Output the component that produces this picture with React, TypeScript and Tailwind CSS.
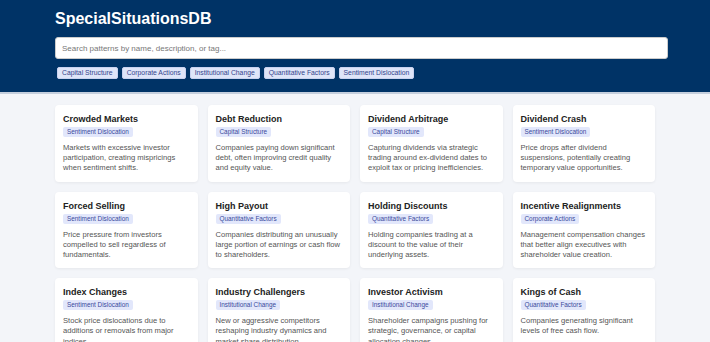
const CATEGORIES = [
  "Capital Structure",
  "Corporate Actions",
  "Institutional Change",
  "Quantitative Factors",
  "Sentiment Dislocation",
];

type Pattern = {
  name: string;
  tag: string;
  description: string;
};

const PATTERNS: Pattern[] = [
  {
    name: "Crowded Markets",
    tag: "Sentiment Dislocation",
    description: "Markets with excessive investor participation, creating mispricings when sentiment shifts.",
  },
  {
    name: "Debt Reduction",
    tag: "Capital Structure",
    description: "Companies paying down significant debt, often improving credit quality and equity value.",
  },
  {
    name: "Dividend Arbitrage",
    tag: "Capital Structure",
    description: "Capturing dividends via strategic trading around ex-dividend dates to exploit tax or pricing inefficiencies.",
  },
  {
    name: "Dividend Crash",
    tag: "Sentiment Dislocation",
    description: "Price drops after dividend suspensions, potentially creating temporary value opportunities.",
  },
  {
    name: "Forced Selling",
    tag: "Sentiment Dislocation",
    description: "Price pressure from investors compelled to sell regardless of fundamentals.",
  },
  {
    name: "High Payout",
    tag: "Quantitative Factors",
    description: "Companies distributing an unusually large portion of earnings or cash flow to shareholders.",
  },
  {
    name: "Holding Discounts",
    tag: "Quantitative Factors",
    description: "Holding companies trading at a discount to the value of their underlying assets.",
  },
  {
    name: "Incentive Realignments",
    tag: "Corporate Actions",
    description: "Management compensation changes that better align executives with shareholder value creation.",
  },
  {
    name: "Index Changes",
    tag: "Sentiment Dislocation",
    description: "Stock price dislocations due to additions or removals from major indices.",
  },
  {
    name: "Industry Challengers",
    tag: "Institutional Change",
    description: "New or aggressive competitors reshaping industry dynamics and market share distribution.",
  },
  {
    name: "Investor Activism",
    tag: "Institutional Change",
    description: "Shareholder campaigns pushing for strategic, governance, or capital allocation changes.",
  },
  {
    name: "Kings of Cash",
    tag: "Quantitative Factors",
    description: "Companies generating significant levels of free cash flow.",
  },
];

function PatternCard({ pattern }: { pattern: Pattern }) {
  return (
    <div className="rounded-[4px] bg-white p-2 shadow-[0_1px_3px_rgba(0,0,0,0.06)]">
      <h3 className="text-[9px] font-bold leading-[12px] text-[#222]">{pattern.name}</h3>
      <span className="mt-[2px] block w-fit rounded-[2px] bg-[#e2e7fb] px-1 text-[6.4px] leading-[10px] text-[#3a4a9c]">
        {pattern.tag}
      </span>
      <p className="mt-[6px] text-[7.6px] leading-[10.2px] text-[#555]">{pattern.description}</p>
    </div>
  );
}

export default function App() {
  return (
    <div className="min-h-screen bg-[#f3f5f9] font-['Liberation_Sans',Arial,sans-serif]">
      <header className="border-b-2 border-[#c5cfdd] bg-[#003366] pb-[11px] pt-[9px]">
        <div className="mx-auto w-[600px]">
          <h1 className="text-[16px] font-bold leading-[20px] text-white">SpecialSituationsDB</h1>
          <input
            type="text"
            placeholder="Search patterns by name, description, or tag..."
            className="mt-2 block h-[22px] w-[613px] rounded-[3px] border border-[#ccc] bg-white px-[6px] text-[8px] text-[#333] outline-none placeholder:text-[#777]"
          />
          <div className="mt-[6px] flex flex-wrap">
            {CATEGORIES.map((cat) => (
              <button
                key={cat}
                type="button"
                className="m-[2px] h-[12px] rounded-[2px] border border-[#c9d2ef] bg-[#dfe5f8] px-[4px] text-[6.8px] leading-[10px] text-[#34448c]"
              >
                {cat}
              </button>
            ))}
          </div>
        </div>
      </header>

      <main className="mx-auto w-[600px] pb-6 pt-[11px]">
        <div className="grid grid-cols-4 gap-[10px]">
          {PATTERNS.map((p) => (
            <PatternCard key={p.name} pattern={p} />
          ))}
        </div>
      </main>
    </div>
  );
}
